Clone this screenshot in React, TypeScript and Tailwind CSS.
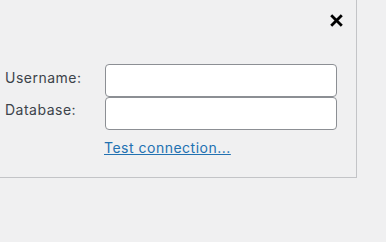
import { useState } from "react"

export default function App() {
  const [username, setUsername] = useState("")
  const [database, setDatabase] = useState("")

  return (
    <div className="w-[386px] h-[242px] bg-[#f0f0f1] text-[#3c434a] font-['Inter','Liberation_Sans',sans-serif] text-[14px] tracking-[0.5px]">
      <div className="w-[357px] h-[178px] border-r border-b border-[#c3c4c7] flex flex-col">
        {/* header */}
        <div className="flex justify-end pt-[14px] pr-[13px] h-[64px]">
          <button className="w-[13px] h-[13px] text-black" title="Close">
            <svg viewBox="0 0 13 13" className="w-[13px] h-[13px]">
              <path d="M2.2 2.2 L10.8 10.8 M10.8 2.2 L2.2 10.8" stroke="currentColor" strokeWidth="2.8" strokeLinecap="square" />
            </svg>
          </button>
        </div>

        {/* fields */}
        <div className="grid grid-cols-[100px_232px] pl-[5px]">
          <label className="h-[33px] pt-[4px] leading-[20px]">Username:</label>
          <input
            value={username}
            onChange={(e) => setUsername(e.target.value)}
            className="h-[33px] bg-white border border-[#8c8f94] rounded-[4px] px-2 outline-none"
          />
          <label className="h-[33px] pt-[3px] leading-[20px]">Database:</label>
          <input
            value={database}
            onChange={(e) => setDatabase(e.target.value)}
            className="h-[33px] bg-white border border-[#8c8f94] rounded-[4px] px-2 outline-none"
          />
          <div />
          <div className="pt-[7px] -ml-[1px]">
            <a href="#" className="text-[#2271b1] underline">Test connection...</a>
          </div>
        </div>
      </div>
    </div>
  )
}
